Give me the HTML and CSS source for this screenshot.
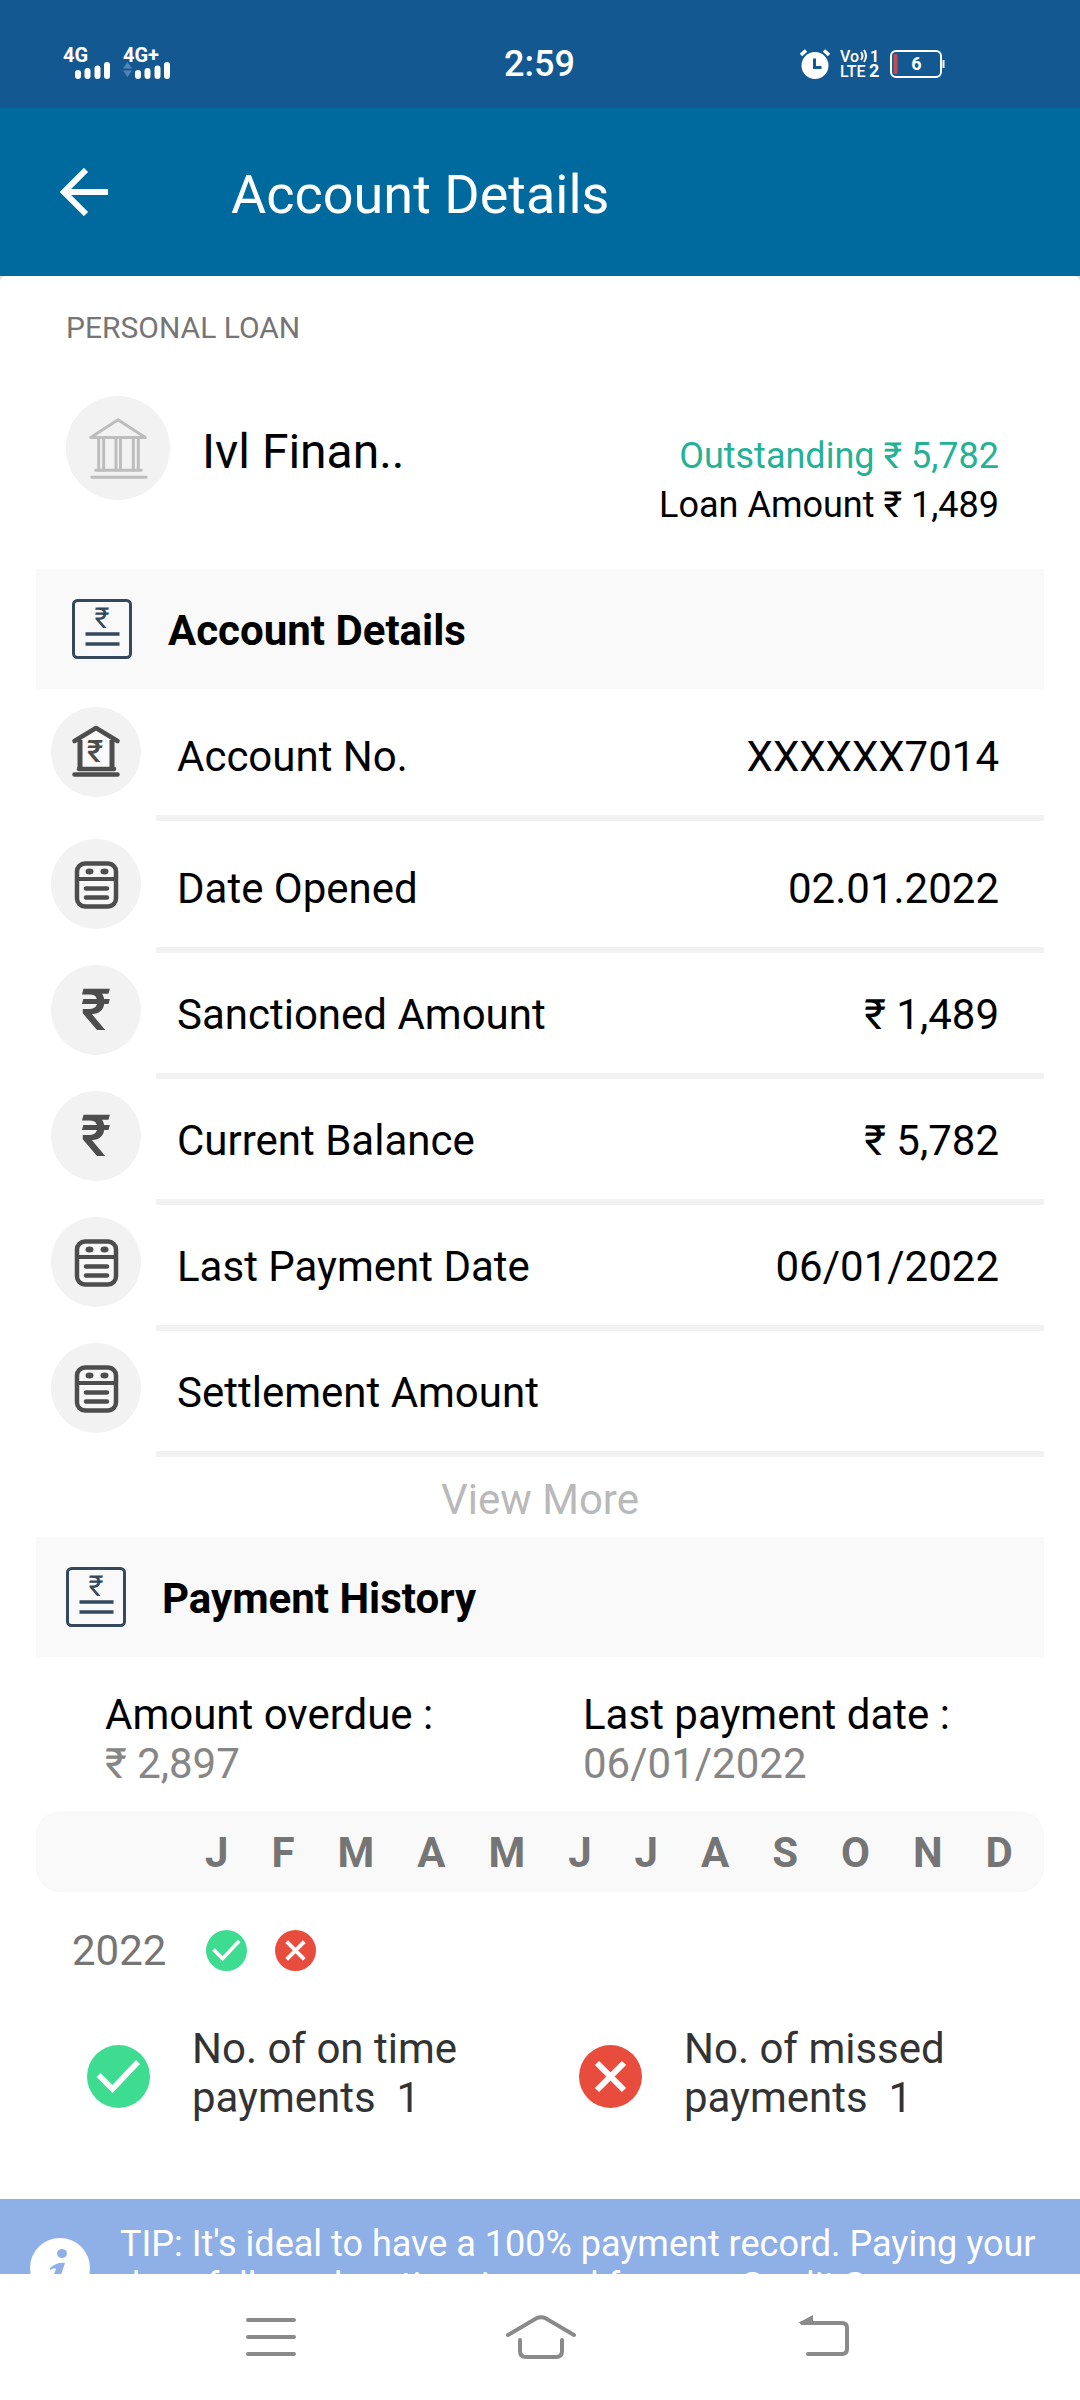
FILE: index.html
```html
<!DOCTYPE html>
<html lang="en">
<head>
<meta charset="utf-8">
<meta name="viewport" content="width=device-width, initial-scale=1">
<title>Account Details</title>
<link rel="stylesheet" href="styles.css">
</head>
<body>
<svg class="sprite" aria-hidden="true">
  <symbol id="statement" viewBox="0 0 60 60">
    <rect x="1.500" y="1.500" width="57" height="57" rx="4" fill="none" stroke="#34495e" stroke-width="3"/>
    <path d="M13.500 35h34M13.500 45h34" stroke="#34495e" stroke-width="3.500"/>
    <text x="30" y="29" text-anchor="middle" font-size="29" font-weight="400" fill="#34495e">₹</text>
  </symbol>
  <symbol id="bank" viewBox="0 0 105 105">
    <g fill="none" stroke="#bdbdbd" stroke-width="3" stroke-linejoin="round" stroke-linecap="round">
      <path d="M25 42 52.500 24 80 42ZM30 75h46M26 82h55"/>
      <path d="M33 42v33M38 42v33M50.500 42v33M55 42v33M68 42v33M73 42v33"/>
    </g>
  </symbol>
  <symbol id="bank-rupee" viewBox="0 0 90 90">
    <path d="M31 32 45 23 59 32V60H31Z" fill="#fafafa"/>
    <path d="M29 33v29M61 33v29" fill="none" stroke="#4d4d4d" stroke-width="5"/>
    <path d="M23.500 34 45 21 66.500 34M28 62h35M23.500 67.500h43" fill="none" stroke="#4d4d4d" stroke-width="4.500" stroke-linecap="round" stroke-linejoin="round"/>
    <text x="44" y="55" text-anchor="middle" font-size="31" font-weight="500" fill="#4d4d4d">₹</text>
  </symbol>
  <symbol id="calendar" viewBox="0 0 90 90">
    <rect x="26" y="24.500" width="39" height="43" rx="8" fill="#f8f8f8" stroke="#4d4d4d" stroke-width="4.500"/>
    <path d="M25 40h42" stroke="#4d4d4d" stroke-width="4"/>
    <path d="M35 49.500h21M35 58.500h21" stroke="#4d4d4d" stroke-width="4.500" stroke-linecap="round"/>
    <ellipse cx="38.500" cy="32.500" rx="4" ry="3" fill="#4d4d4d"/><ellipse cx="53.500" cy="32.500" rx="4" ry="3" fill="#4d4d4d"/>
  </symbol>
  <symbol id="rupee" viewBox="0 0 90 90">
    <text x="45" y="65" text-anchor="middle" font-size="58" font-weight="500" fill="#4d4d4d">₹</text>
  </symbol>
  <symbol id="ok" viewBox="0 0 63 63">
    <circle cx="31.500" cy="31.500" r="31.500" fill="#3ddc91"/>
    <path d="M11.500 30 25.500 44 51 17" fill="none" stroke="#fff" stroke-width="5.500"/>
  </symbol>
  <symbol id="missed" viewBox="0 0 63 63">
    <circle cx="31.500" cy="31.500" r="31.500" fill="#e84c3d"/>
    <path d="M18 18 45 45M45 18 18 45" stroke="#fff" stroke-width="6"/>
  </symbol>
  <symbol id="signal" viewBox="0 0 35 17">
    <path d="M3 11v3M12.500 9v5M22.500 6.500v7.500M32 3v11" stroke="#fff" stroke-width="6" stroke-linecap="round"/>
  </symbol>
</svg>

<div class="app">
  <header class="status">
    <div class="networks">
      <div class="network"><span>4G</span><svg width="35" height="17"><use href="#signal"/></svg></div>
      <div class="network"><span>4G+</span><svg width="9" height="15" viewBox="0 0 9 15"><path d="M0 6.500 4.500 0 9 6.500ZM0 8.500H9L4.500 15Z" fill="#5084b5"/></svg><svg width="35" height="17"><use href="#signal"/></svg></div>
    </div>
    <time class="clock">2:59</time>
    <div class="indicators">
      <svg width="30" height="30" viewBox="0 0 30 30" aria-label="Alarm"><circle cx="15" cy="16.500" r="13.500" fill="#fff"/><path d="M1 6 6 1.500M24 1.500 29 6" stroke="#fff" stroke-width="3.500"/><path d="M14.500 9.500v9h7" fill="none" stroke="#145891" stroke-width="3"/></svg>
      <svg width="40" height="42" viewBox="0 -6 40 42" aria-label="VoLTE"><g fill="#fff" font-weight="700" font-size="16"><text x="0" y="13" font-weight="500">Vo</text><text x="30" y="13">1</text><text x="0" y="28" font-weight="500">LTE</text><text x="29" y="28" font-size="18">2</text></g><path d="M21 3q3 4 0 8M24 1q4 6 0 12" fill="none" stroke="#fff" stroke-width="2"/></svg>
      <svg width="55" height="28" viewBox="0 0 55 28" aria-label="Battery"><rect x="1" y="1" width="50" height="26" rx="5" fill="none" stroke="#fff" stroke-width="2"/><rect x="3.500" y="4" width="4" height="20" rx="1" fill="#c9474f"/><path d="M53.500 10v8" stroke="#fff" stroke-width="2"/><text x="26.500" y="20" text-anchor="middle" font-size="18" font-weight="700" fill="#fff">6</text></svg>
    </div>
  </header>

  <div class="appbar">
    <button class="back" type="button" aria-label="Back"><svg width="48" height="48" viewBox="0 0 48 48"><path d="M48 24H6M26 2 4 24 26 46" fill="none" stroke="#fff" stroke-width="6"/></svg></button>
    <h1>Account Details</h1>
  </div>

  <main>
    <div class="sheet">
      <section class="loan">
        <p class="kind">PERSONAL LOAN</p>
        <div class="lender">
          <svg class="disc" width="104" height="104"><use href="#bank"/></svg>
          <h2>Ivl Finan..</h2>
          <div class="totals"><p class="outstanding">Outstanding ₹ 5,782</p><p>Loan Amount ₹ 1,489</p></div>
        </div>
      </section>

      <section class="card">
        <h2 class="band band-details"><svg width="60" height="60"><use href="#statement"/></svg><span>Account Details</span></h2>
        <dl class="rows">
          <div class="row tall"><svg class="disc" width="90" height="90"><use href="#bank-rupee"/></svg><div class="pair"><dt>Account No.</dt><dd>XXXXXX7014</dd></div></div>
          <div class="row tall"><svg class="disc" width="90" height="90"><use href="#calendar"/></svg><div class="pair"><dt>Date Opened</dt><dd>02.01.2022</dd></div></div>
          <div class="row"><svg class="disc" width="90" height="90"><use href="#rupee"/></svg><div class="pair"><dt>Sanctioned Amount</dt><dd>₹ 1,489</dd></div></div>
          <div class="row"><svg class="disc" width="90" height="90"><use href="#rupee"/></svg><div class="pair"><dt>Current Balance</dt><dd>₹ 5,782</dd></div></div>
          <div class="row"><svg class="disc" width="90" height="90"><use href="#calendar"/></svg><div class="pair"><dt>Last Payment Date</dt><dd>06/01/2022</dd></div></div>
          <div class="row"><svg class="disc" width="90" height="90"><use href="#calendar"/></svg><div class="pair"><dt>Settlement Amount</dt><dd></dd></div></div>
        </dl>
        <button class="more" type="button">View More</button>
      </section>

      <section class="card">
        <h2 class="band band-history"><svg width="60" height="60"><use href="#statement"/></svg><span>Payment History</span></h2>
        <dl class="summary">
          <div><dt>Amount overdue :</dt><dd>₹ 2,897</dd></div>
          <div><dt>Last payment date :</dt><dd>06/01/2022</dd></div>
        </dl>
        <div class="months"><span>J</span><span>F</span><span>M</span><span>A</span><span>M</span><span>J</span><span>J</span><span>A</span><span>S</span><span>O</span><span>N</span><span>D</span></div>
        <div class="year"><span class="year-label">2022</span>
          <svg width="41" height="41" role="img" aria-label="On time"><use href="#ok"/></svg>
          <svg width="41" height="41" role="img" aria-label="Missed"><use href="#missed"/></svg>
        </div>
        <div class="legend">
          <div class="legend-item"><svg width="63" height="63"><use href="#ok"/></svg><p>No. of on time<br>payments&nbsp; 1</p></div>
          <div class="legend-item"><svg width="63" height="63"><use href="#missed"/></svg><p>No. of missed<br>payments&nbsp; 1</p></div>
        </div>
      </section>
    </div>

    <aside class="tip">
      <svg width="60" height="60" viewBox="0 0 60 60"><circle cx="30" cy="30" r="30" fill="#fff"/><g fill="#8fb0e6"><ellipse cx="32" cy="15.500" rx="5" ry="4.500"/><path d="M20 30Q27 24 35 25L29 43Q29 46 36 42V44Q28 50 23 48 20 46 22 41L26 31Q25 29 20 32Z"/></g></svg>
      <p>TIP: It's ideal to have a 100% payment record. Paying your dues fully and on time is good for your Credit Score.</p>
    </aside>
  </main>

  <nav class="system">
    <button type="button" aria-label="Recent apps"><svg width="50" height="44" viewBox="0 0 50 44"><path d="M2 5h46M2 22h46M2 39h46" stroke="#8a8a8a" stroke-width="4" stroke-linecap="round"/></svg></button>
    <button type="button" aria-label="Home"><svg width="70" height="44" viewBox="0 0 70 44"><path d="M2 20 30 3.500Q35 1 40 3.500L68 20M14 25V36Q14 42 20 42H50Q56 42 56 36V25" fill="none" stroke="#8a8a8a" stroke-width="4" stroke-linecap="round"/></svg></button>
    <button type="button" aria-label="Back"><svg width="64" height="44" viewBox="-12 0 64 44"><path d="M4 8H44Q49 8 49 13V34Q49 39 44 39H10" fill="none" stroke="#8a8a8a" stroke-width="4" stroke-linecap="round"/><path d="M0 8 15 0V9Z" fill="#8a8a8a"/></svg></button>
  </nav>
</div>
</body>
</html>
```
FILE: styles.css
```css
* { box-sizing: border-box; margin: 0; padding: 0; }

body {
  background: #fff;
  color: #000;
  font-family: Roboto, sans-serif;
  font-size: 42px;
  line-height: 49px;
}

button { border: 0; background: none; font: inherit; color: inherit; }
svg { display: block; flex: none; }
.sprite { display: none; }

.app { display: flex; flex-direction: column; height: 100vh; }

.status {
  display: grid;
  grid-template-columns: 1fr auto 1fr;
  align-items: center;
  height: 108px;
  padding: 19px 135px 0 63px;
  background: #145891;
  color: #fff;
}
.networks { display: flex; gap: 13px; }
.network { display: flex; flex-wrap: wrap; justify-content: flex-end; width: 47px; gap: 0 3px; }
.network span { width: 47px; font-size: 20px; line-height: 14px; font-weight: 700; }
.clock { padding-left: 71px; font-size: 36px; line-height: 42px; font-weight: 500; }
.indicators { display: flex; align-items: center; justify-content: flex-end; gap: 10px; }

.appbar {
  display: flex;
  align-items: center;
  gap: 123px;
  height: 168px;
  padding: 0 60px;
  background: #006a9e;
  color: #fff;
}
.appbar h1 { padding-top: 5px; font-size: 54px; line-height: 64px; font-weight: 400; }

main { flex: 1; min-height: 0; overflow-y: auto; scrollbar-width: none; background: #e4e4e4; }
.sheet { border-radius: 6px 6px 0 0; background: #fff; padding-bottom: 77px; }

.loan { padding: 34px 81px 39px 66px; }
.kind { font-size: 30px; line-height: 35px; color: #757575; }
.lender { display: flex; align-items: flex-start; gap: 32px; padding-top: 51px; }
.lender h2 { flex: 1; padding-top: 28px; font-size: 48px; line-height: 56px; font-weight: 400; }
.disc { border-radius: 50%; background: #f2f2f2; }
.totals { padding-top: 36px; font-size: 36px; text-align: right; }
.outstanding { color: #25b195; }

.card { padding: 0 36px; }
.band {
  display: flex;
  align-items: center;
  gap: 36px;
  height: 120px;
  background: #f9f9f9;
  font-size: 42px;
  font-weight: 700;
}
.band span { padding-top: 2px; }
.band-details { padding-left: 36px; }
.band-history { padding-left: 30px; }

.row { display: flex; gap: 15px; padding: 12px 0 0 15px; }
.tall { padding-top: 18px; }
.pair {
  flex: 1;
  display: flex;
  justify-content: space-between;
  height: 114px;
  padding: 25px 45px 0 21px;
  border-bottom: 6px solid #f2f2f2;
}
.more { display: block; width: 100%; padding: 18px 0 13px; color: #b9b9b9; }

.summary { display: grid; grid-template-columns: 478px 1fr; padding: 33px 69px 23px; }
.summary dd { color: #868686; }
.months {
  display: flex;
  justify-content: space-between;
  padding: 17px 31px 15px 169px;
  border-radius: 24px;
  background: #f9f9f9;
  color: #757575;
  font-weight: 700;
}
.year { display: flex; align-items: center; gap: 28px; padding: 34px 0 0 36px; color: #757575; }
.year-label { width: 106px; }
.legend { display: grid; grid-template-columns: 492px 1fr; padding: 49px 0 0 51px; color: #333; }
.legend-item { display: flex; align-items: flex-start; gap: 42px; }
.legend-item svg { margin-top: 21px; }

.tip { display: flex; align-items: flex-start; gap: 30px; padding: 24px 30px 30px; background: #8fb0e6; color: #fff; }
.tip svg { margin-top: 15px; }
.tip p { font-size: 36px; line-height: 42px; }

.system {
  display: flex;
  align-items: center;
  justify-content: space-between;
  height: 126px;
  padding: 0 230px 0 246px;
  background: #fff;
}
```
